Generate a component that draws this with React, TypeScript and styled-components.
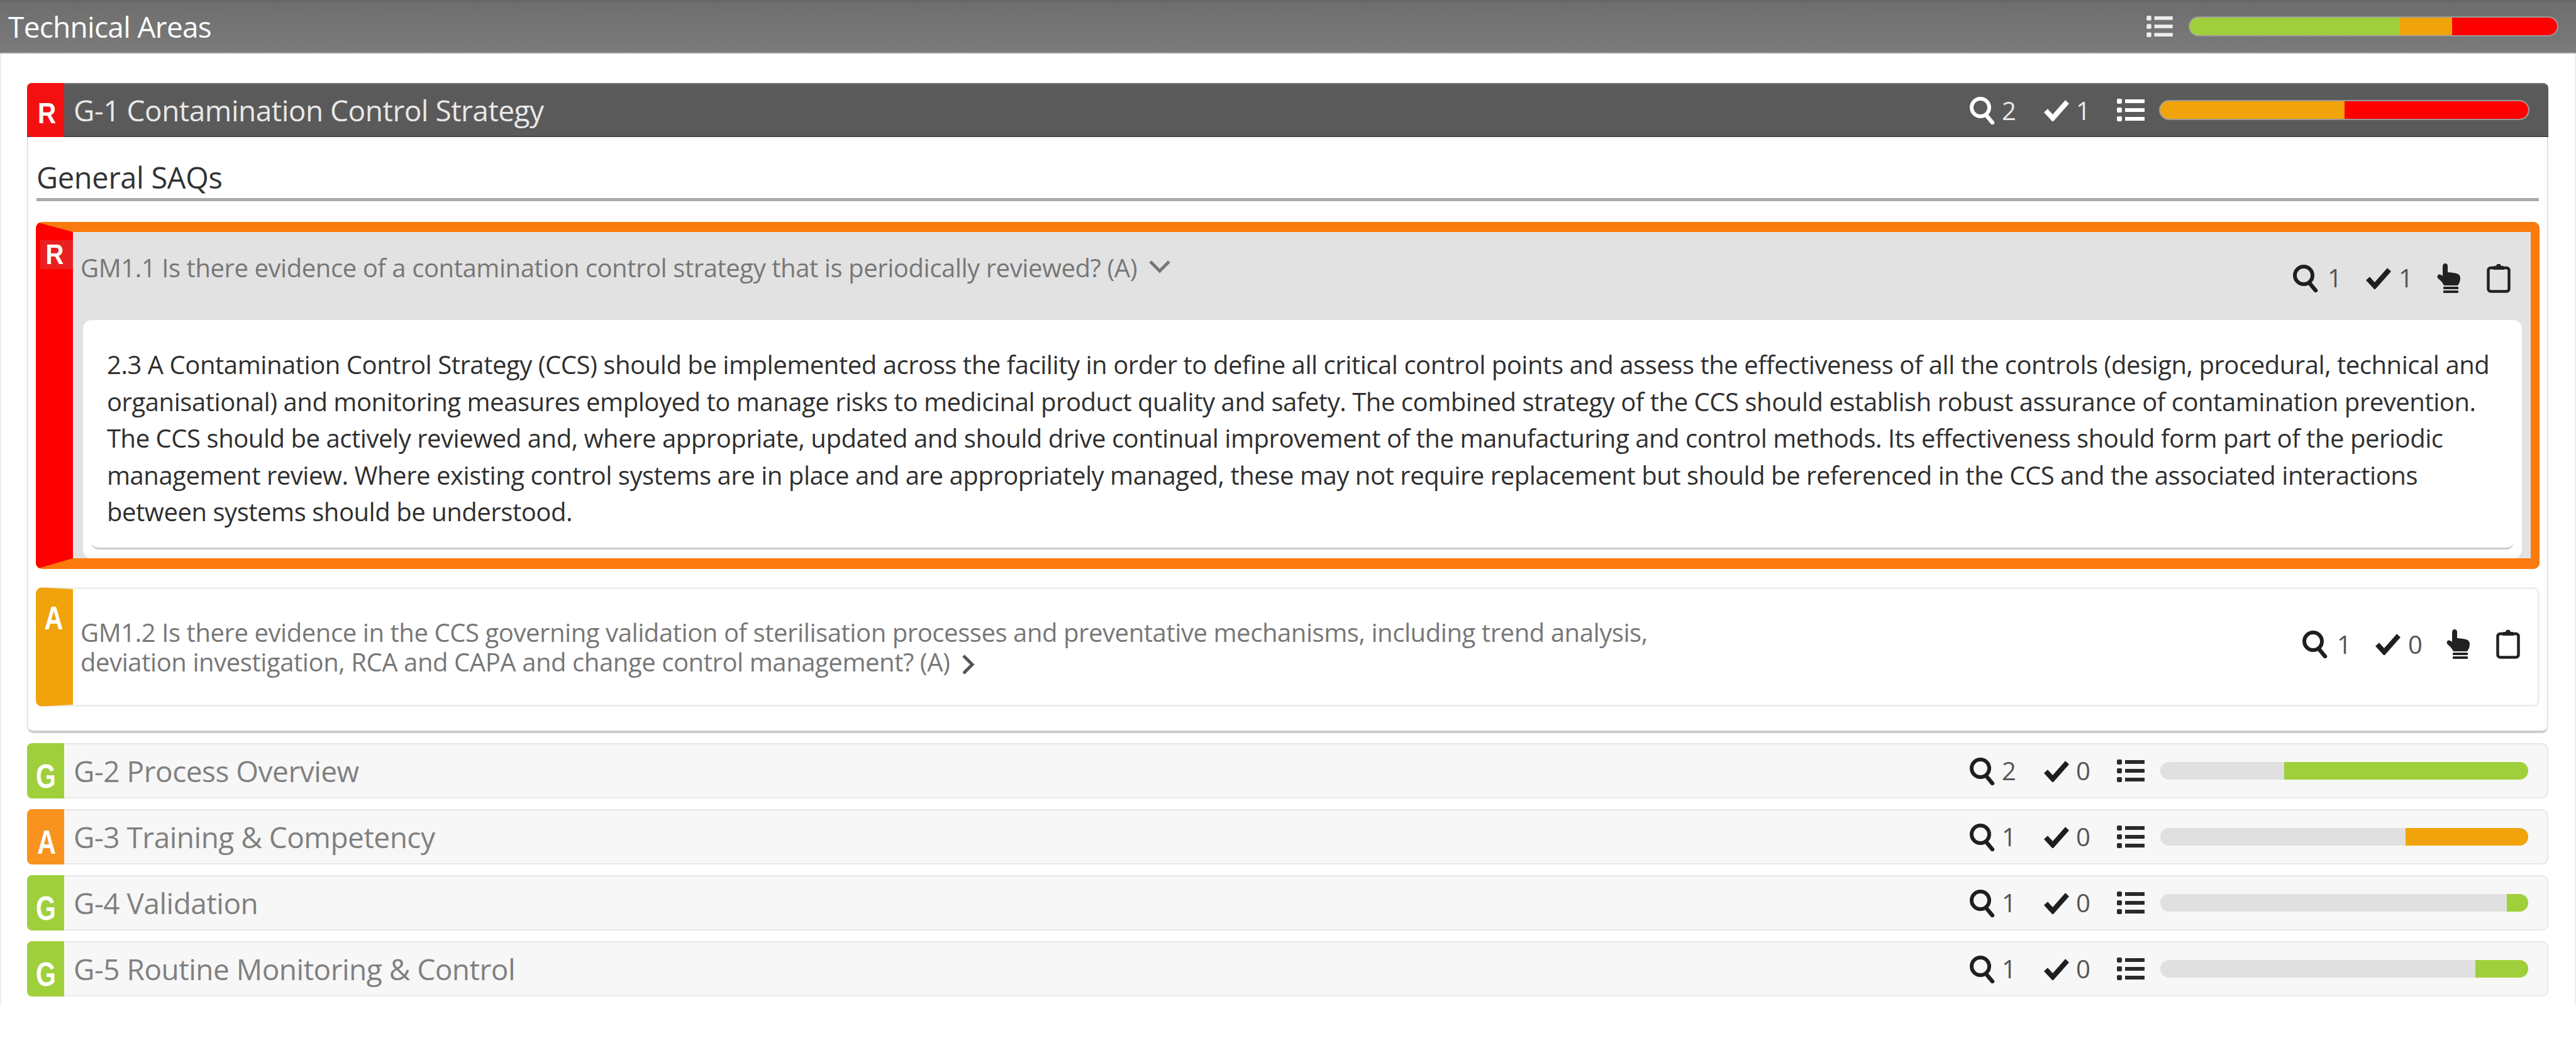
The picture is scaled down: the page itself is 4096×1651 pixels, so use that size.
import React from "react";
import styled, { createGlobalStyle } from "styled-components";

const Global = createGlobalStyle`
  html, body { margin: 0; padding: 0; background: #fff; }
  body { font-family: "Open Sans", "Liberation Sans", sans-serif; }
`;

const colors = { R: "#ff0000", A: "#f0a30a", G: "#a0cf3c", orange: "#fb7a0e" };
type Rag = "R" | "A" | "G";

const Page = styled.div`
  width: 4096px;
  height: 1651px;
  box-sizing: border-box;
  overflow: hidden;
`;
const TopBar = styled.header`
  height: 85px;
  box-sizing: border-box;
  display: flex;
  align-items: center;
  justify-content: space-between;
  padding: 0 30px 0 13px;
  background: linear-gradient(#666 0, #6e6e6e 6px, #7b7b7b 100%);
  border-bottom: 2px solid #999;
  color: #fff;
`;
const TopTitle = styled.div`
  font-size: 46px;
  letter-spacing: -0.7px;
`;
const Tools = styled.div`
  display: flex;
  align-items: center;
`;
const Body = styled.main`
  height: 1513px;
  box-sizing: border-box;
  padding: 47px 42px 0 41px;
  border-left: 2px solid #eee;
  border-right: 2px solid #eee;
`;
const Card = styled.section`
  border: 2px solid #e4e4e4;
  border-top: 0;
  border-radius: 10px;
  padding-bottom: 38px;
  border-bottom: 4px solid #ccc;
  margin-bottom: 16px;
`;
const CardHead = styled.div`
  height: 86px;
  margin: 0 -2px;
  display: flex;
  align-items: center;
  background: #5a5a5a;
  border-top: 2px solid #777;
  border-bottom: 2px solid #444;
  box-sizing: border-box;
  border-radius: 8px 8px 0 0;
  color: #e8e8e8;
  padding-right: 32px;
`;
const HeadBadge = styled.div<{ $rag: Rag; $bg?: string; $bottom: number }>`
  width: 59px;
  align-self: stretch;
  margin: -2px 0;
  flex: none;
  background: ${(p) => p.$bg || colors[p.$rag]};
  border-radius: 8px 0 0 8px;
  display: flex;
  align-items: flex-end;
  justify-content: flex-end;
  padding: 0 13px ${(p) => p.$bottom}px 0;
  box-sizing: border-box;
`;
const Letter = styled.span<{ $size: number; $sx: number }>`
  display: block;
  color: #fff;
  font: bold ${(p) => p.$size}px "Liberation Sans", sans-serif;
  line-height: 38px;
  transform: scaleX(${(p) => p.$sx});
  transform-origin: right center;
`;
const CardTitle = styled.div<{ $muted?: boolean }>`
  flex: 1;
  margin-left: 15px;
  font-size: 46px;
  letter-spacing: -0.5px;
  color: ${(p) => (p.$muted ? "#808080" : "#e8e8e8")};
`;
const SectionTitle = styled.h3`
  margin: 0 13px 33px;
  height: 102px;
  box-sizing: border-box;
  border-bottom: 5px solid #aaa;
  font-weight: 400;
  font-size: 47px;
  letter-spacing: -0.35px;
  color: #333;
  padding: 36px 0 0 0;
  line-height: 56px;
`;
const Question = styled.article<{ $rag: Rag; $active?: boolean }>`
  position: relative;
  margin: 0 12px;
  box-sizing: border-box;
  border-radius: 10px;
  border-style: solid;
  border-color: ${(p) => (p.$active ? colors.orange : "#eee")};
  border-width: ${(p) => (p.$active ? "16px 14px 17px 59px" : "3px 3px 3px 59px")};
  border-left-color: ${(p) => colors[p.$rag]};
  background: ${(p) => (p.$active ? "#e2e2e2" : "#fff")};
  margin-bottom: 29px;
`;
const QLetter = styled.div<{ $top: number; $bg?: string }>`
  position: absolute;
  left: -52px;
  top: ${(p) => p.$top}px;
  width: 52px;
  height: 46px;
  box-sizing: border-box;
  padding-right: 15px;
  display: flex;
  justify-content: flex-end;
  background: ${(p) => p.$bg || "transparent"};
  & > span { line-height: 46px; }
`;
const QRow = styled.div<{ $h: number; $top: number; $iconTop: number; $right: number }>`
  height: ${(p) => p.$h}px;
  box-sizing: border-box;
  display: flex;
  justify-content: space-between;
  align-items: flex-start;
  padding: ${(p) => p.$top}px ${(p) => p.$right}px 0 12px;
  & > aside { margin-top: ${(p) => p.$iconTop}px; }
`;
const QText = styled.div`
  font-size: 40px;
  line-height: 47px;
  letter-spacing: -0.42px;
  color: #777;
`;
const Chevron = styled.svg`
  margin-left: 18px;
  vertical-align: middle;
`;
const ChevronDown = styled(Chevron)`
  vertical-align: 6px;
`;
const Panel = styled.div`
  margin: 0 14px 0 16px;
  background: #fff;
  border-radius: 14px;
  padding: 0 13px 14px;
`;
const PanelInner = styled.div`
  border-bottom: 3px solid #ccc;
  border-radius: 0 0 12px 12px;
  padding: 42px 15px 27px 25px;
  font-size: 40px;
  line-height: 58.6px;
  letter-spacing: -0.45px;
  color: #2f2f2f;
`;
const Row = styled.div`
  height: 88px;
  box-sizing: border-box;
  display: flex;
  align-items: center;
  border: 2px solid #e8e8e8;
  border-left: 0;
  border-radius: 10px;
  background: #f7f7f7;
  margin-bottom: 17px;
  padding-right: 30px;
`;
const Stat = styled.div<{ $w: number; $dark?: boolean }>`
  width: ${(p) => p.$w}px;
  display: flex;
  align-items: center;
  font-size: 40px;
  color: ${(p) => (p.$dark ? "#e8e8e8" : "#555")};
`;
const StatIcon = styled.svg<{ $gap: number }>`
  flex: none;
  margin-right: ${(p) => p.$gap}px;
`;
const Stats = styled.aside`
  display: flex;
  align-items: center;
`;
const Track = styled.div<{ $dark?: boolean; $w: number }>`
  width: ${(p) => p.$w}px;
  height: 28px;
  display: flex;
  justify-content: flex-end;
  overflow: hidden;
  border-radius: 14px;
  background: #e0e0e0;
  flex: none;
  ${(p) => (p.$dark ? "box-shadow: 0 0 0 2px #999;" : "")}
`;
const Seg = styled.div<{ $c: string }>`
  background: ${(p) => p.$c};
  height: 100%;
`;

const SearchIcon = ({ c, gap }: { c: string; gap: number }) => (
  <StatIcon $gap={gap} width="44" height="46" viewBox="0 0 44 46" fill="none">
    <circle cx="19" cy="19" r="14" stroke={c} strokeWidth="6" />
    <path d="M28 31 L38 43" stroke={c} strokeWidth="6.5" strokeLinecap="round" />
  </StatIcon>
);
const CheckIcon = ({ c, gap }: { c: string; gap: number }) => (
  <StatIcon $gap={gap} width="42" height="36" viewBox="0 0 42 36" fill="none">
    <path d="M4 19 L15 31 L38 5" stroke={c} strokeWidth="8" strokeLinejoin="miter" />
  </StatIcon>
);
const ListIcon = ({ c, w = 44, h = 36 }: { c: string; w?: number; h?: number }) => (
  <svg width={w} height={h} viewBox="0 0 44 36" fill={c} style={{ flex: "none" }}>
    <rect x="0" y="0" width="8" height="8" rx="2" />
    <rect x="0" y="14" width="8" height="8" rx="2" />
    <rect x="0" y="28" width="8" height="8" rx="2" />
    <rect x="13" y="1" width="31" height="6" />
    <rect x="13" y="15" width="31" height="6" />
    <rect x="13" y="29" width="31" height="6" />
  </svg>
);
const HandIcon = () => (
  <svg width="38" height="48" viewBox="0 0 38 48" fill="#222" style={{ flex: "none" }}>
    <path d="M13 1 C15.5 1 17 3 17 5 L17 15 C22 15 27 16 31 17 C35 18 37 21 37 24 C37 30 35 33 33 36 L11 36 C9 32 7 29 3 26 C0 24 0 21 2 19 C4 18 7 19 9 21 L9 5 C9 3 11 1 13 1 Z" />
    <rect x="10" y="38" width="24" height="4" rx="1" />
    <rect x="10" y="44" width="24" height="4" rx="1" />
  </svg>
);
const ClipIcon = () => (
  <svg width="38" height="48" viewBox="0 0 38 48" fill="none" stroke="#222" style={{ flex: "none", marginLeft: 41 }}>
    <rect x="2.5" y="8" width="33" height="37.5" rx="4" strokeWidth="4.5" />
    <path d="M11 10 L12 6 L16 6 C16 1.5 22 1.5 22 6 L26 6 L27 10 Z" fill="#222" strokeWidth="2" />
  </svg>
);

const Down = () => (
  <ChevronDown width="36" height="22" viewBox="0 0 36 22" fill="none">
    <path d="M3 3 L18 18 L33 3" stroke="#777" strokeWidth="5" />
  </ChevronDown>
);
const Right = () => (
  <Chevron width="22" height="34" viewBox="0 0 22 34" fill="none">
    <path d="M4 3 L18 17 L4 31" stroke="#555" strokeWidth="5" />
  </Chevron>
);

const QStats = ({ a, b }: { a: number; b: number }) => (
  <Stats>
    <Stat $w={117}>
      <SearchIcon c="#1f1f1f" gap={13} />
      {a}
    </Stat>
    <Stat $w={114}>
      <CheckIcon c="#1f1f1f" gap={11} />
      {b}
    </Stat>
    <HandIcon />
    <ClipIcon />
  </Stats>
);

const AreaStats = ({ q, c, dark }: { q: number; c: number; dark?: boolean }) => {
  const col = dark ? "#fff" : "#1f1f1f";
  return (
    <Stats>
      <Stat $w={119} $dark={dark}>
        <SearchIcon c={col} gap={9} />
        {q}
      </Stat>
      <Stat $w={117} $dark={dark}>
        <CheckIcon c={col} gap={10} />
        {c}
      </Stat>
      <ListIcon c={dark ? "#fff" : "#2a2a2a"} />
    </Stats>
  );
};

const areas: { rag: Rag; bg?: string; title: string; q: number; c: number; pct: number; col: string }[] = [
  { rag: "G", title: "G-2 Process Overview", q: 2, c: 0, pct: 66.3, col: colors.G },
  { rag: "A", bg: "#f7931e", title: "G-3 Training & Competency", q: 1, c: 0, pct: 33.3, col: colors.A },
  { rag: "G", title: "G-4 Validation", q: 1, c: 0, pct: 5.8, col: colors.G },
  { rag: "G", title: "G-5 Routine Monitoring & Control", q: 1, c: 0, pct: 14.4, col: colors.G },
];

export default function App() {
  return (
    <Page>
      <Global />
      <TopBar>
        <TopTitle>Technical Areas</TopTitle>
        <Tools>
          <ListIcon c="#eee" w={44} h={34} />
          <Track $dark $w={584} style={{ marginLeft: 26 }}>
            <Seg $c={colors.G} style={{ width: "57.2%" }} />
            <Seg $c={colors.A} style={{ width: "14.2%" }} />
            <Seg $c={colors.R} style={{ width: "28.6%" }} />
          </Track>
        </Tools>
      </TopBar>
      <Body>
        <Card>
          <CardHead>
            <HeadBadge $rag="R" $bottom={19} $bg="#f41010">
              <Letter $size={46} $sx={0.88}>R</Letter>
            </HeadBadge>
            <CardTitle>G-1 Contamination Control Strategy</CardTitle>
            <AreaStats q={2} c={1} dark />
            <Track $dark $w={585} style={{ marginLeft: 25 }}>
              <Seg $c={colors.A} style={{ width: "50%" }} />
              <Seg $c={colors.R} style={{ width: "50%" }} />
            </Track>
          </CardHead>
          <SectionTitle>General SAQs</SectionTitle>
          <Question $rag="R" $active>
            <QLetter $top={13} $bg="#e8201f">
              <Letter $size={45} $sx={0.89}>R</Letter>
            </QLetter>
            <QRow $h={140} $top={33} $iconTop={12} $right={32}>
              <QText>
                GM1.1 Is there evidence of a contamination control strategy that is periodically reviewed? (A)
                <Down />
              </QText>
              <QStats a={1} b={1} />
            </QRow>
            <Panel>
              <PanelInner>
                2.3 A Contamination Control Strategy (CCS) should be implemented across the facility in order to define all critical control points and assess the effectiveness of all the controls (design, procedural, technical and organisational) and monitoring measures employed to manage risks to medicinal product quality and safety. The combined strategy of the CCS should establish robust assurance of contamination prevention. The CCS should be actively reviewed and, where appropriate, updated and should drive continual improvement of the manufacturing and control methods. Its effectiveness should form part of the periodic management review. Where existing control systems are in place and are appropriately managed, these may not require replacement but should be referenced in the CCS and the associated interactions between systems should be understood.
              </PanelInner>
            </Panel>
          </Question>
          <Question $rag="A" style={{ marginBottom: 0 }}>
            <QLetter $top={23}>
              <Letter $size={52} $sx={0.8}>A</Letter>
            </QLetter>
            <QRow $h={184} $top={45} $iconTop={15} $right={28}>
              <QText>
                GM1.2 Is there evidence in the CCS governing validation of sterilisation processes and preventative mechanisms, including trend analysis,
                <br />
                deviation investigation, RCA and CAPA and change control management? (A)
                <Right />
              </QText>
              <QStats a={1} b={0} />
            </QRow>
          </Question>
        </Card>
        {areas.map((a) => (
          <Row key={a.title}>
            <HeadBadge $rag={a.rag} $bg={a.bg} $bottom={17}>
              <Letter $size={54} $sx={0.76}>{a.rag}</Letter>
            </HeadBadge>
            <CardTitle $muted>{a.title}</CardTitle>
            <AreaStats q={a.q} c={a.c} />
            <Track $w={585} style={{ marginLeft: 25 }}>
              <Seg $c={a.col} style={{ width: `${a.pct}%` }} />
            </Track>
          </Row>
        ))}
      </Body>
    </Page>
  );
}
